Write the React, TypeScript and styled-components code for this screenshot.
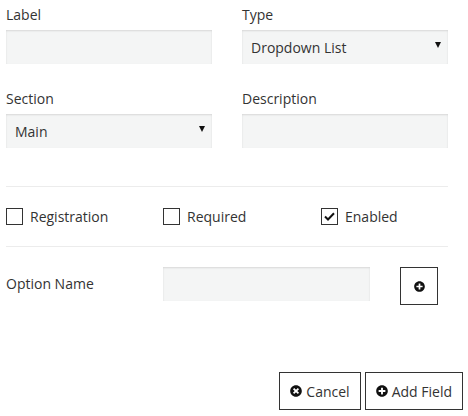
import { FC, ReactNode } from 'react';
import styled, { createGlobalStyle } from 'styled-components';
import { FaPlusCircle, FaTimesCircle } from 'react-icons/fa';

const GlobalStyle = createGlobalStyle`
   body {
      margin: 0;
      background: #fff;
      font-family: "Open Sans", "Liberation Sans", sans-serif;
      color: #333;
   }
`;

const Form = styled.div`
   width: 442px;
   padding: 5px 6px 0;
`;

const FieldGrid = styled.div`
   display: grid;
   grid-template-columns: 206px 206px;
   column-gap: 30px;
   row-gap: 25px;
`;

const Field = styled.div`
   display: flex;
   flex-direction: column;
   gap: 5px;
`;

const Label = styled.label`
   font-size: 14px;
   line-height: 20px;
   color: #333;
`;

const Input = styled.div<{ $width?: number }>`
   box-sizing: border-box;
   height: 34px;
   width: ${p => (p.$width ? `${p.$width}px` : '100%')};
   background: #f4f5f5;
   box-shadow: inset 0 1px 2px rgba(0, 0, 0, 0.12);
   display: flex;
   align-items: center;
   justify-content: space-between;
   padding: 0 7px 0 9px;
   font-size: 14px;
   color: #333;
`;

const Caret = styled.span`
   width: 0;
   height: 0;
   border-left: 3px solid transparent;
   border-right: 3px solid transparent;
   border-top: 6px solid #111;
   margin-top: -4px;
`;

const Divider = styled.hr<{ $top: number }>`
   border: 0;
   border-top: 1px solid #ececec;
   margin: ${p => p.$top}px 0 0;
   height: 0;
`;

const CheckRow = styled.div`
   display: grid;
   grid-template-columns: 157px 158px auto;
   height: 59px;
   align-items: center;
`;

const Check = styled.label`
   display: flex;
   align-items: center;
   gap: 7px;
   font-size: 14px;
   color: #333;
`;

const Box = styled.span`
   box-sizing: border-box;
   width: 17px;
   height: 17px;
   border: 1.5px solid #333;
   display: flex;
   align-items: center;
   justify-content: center;
`;

const OptionRow = styled.div`
   display: grid;
   grid-template-columns: 157px 207px 38px;
   align-items: start;
   margin-top: 20px;
`;

const OptionLabel = styled.span`
   font-size: 14px;
   line-height: 33px;
   color: #333;
`;

const IconButton = styled.button`
   box-sizing: border-box;
   width: 38px;
   height: 38px;
   margin-left: 30px;
   border: 1px solid #333;
   background: #fff;
   display: flex;
   align-items: center;
   justify-content: center;
   padding: 0;
   font-size: 11px;
   color: #111;
`;

const Footer = styled.div`
   display: flex;
   justify-content: flex-end;
   gap: 4px;
   margin: 67px -15px 0 0;
`;

const Button = styled.button`
   box-sizing: border-box;
   height: 38px;
   padding: 0 10px;
   border: 1px solid #333;
   background: #fff;
   display: flex;
   align-items: center;
   gap: 4px;
   font-family: "Open Sans", "Liberation Sans", sans-serif;
   font-size: 14px;
   color: #333;
   svg {
      font-size: 12px;
      color: #111;
   }
`;

const Checkbox: FC<{ checked?: boolean; children: ReactNode }> = ({ checked, children }) => (
   <Check>
      <Box>
         {checked && (
            <svg width="11" height="9" viewBox="0 0 11 9">
               <path d="M1 4.5 L4 7.5 L10 1.2" fill="none" stroke="#111" strokeWidth="2" />
            </svg>
         )}
      </Box>
      {children}
   </Check>
);

const App: FC = () => (
   <>
      <GlobalStyle />
      <Form>
         <FieldGrid>
            <Field>
               <Label>Label</Label>
               <Input />
            </Field>
            <Field>
               <Label>Type</Label>
               <Input>Dropdown List<Caret /></Input>
            </Field>
            <Field>
               <Label>Section</Label>
               <Input>Main<Caret /></Input>
            </Field>
            <Field>
               <Label>Description</Label>
               <Input />
            </Field>
         </FieldGrid>
         <Divider $top={38} />
         <CheckRow>
            <Checkbox>Registration</Checkbox>
            <Checkbox>Required</Checkbox>
            <Checkbox checked>Enabled</Checkbox>
         </CheckRow>
         <Divider $top={0} />
         <OptionRow>
            <OptionLabel>Option Name</OptionLabel>
            <Input $width={207} />
            <IconButton><FaPlusCircle /></IconButton>
         </OptionRow>
         <Footer>
            <Button><FaTimesCircle />Cancel</Button>
            <Button><FaPlusCircle />Add Field</Button>
         </Footer>
      </Form>
   </>
);

export default App;
